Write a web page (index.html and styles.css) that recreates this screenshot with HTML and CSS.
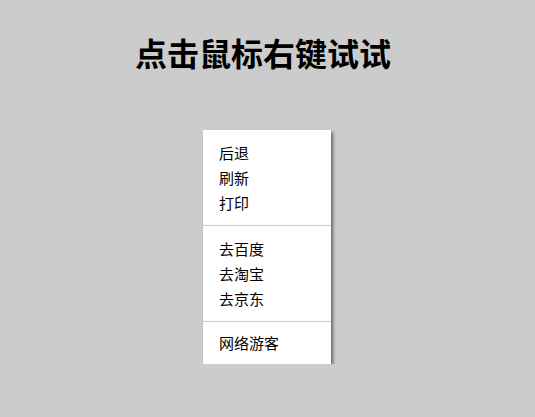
FILE: index.html
```html
<!DOCTYPE html>
<html lang="zh-CN">
<head>
    <meta charset="UTF-8">
    <meta name="viewport" content="width=device-width, initial-scale=1.0">
    <title>右键菜单</title>
    <link rel="stylesheet" href="styles.css">
</head>
<body>

    <h1>点击鼠标右键试试</h1>

    <!-- 自定义右键菜单 -->
    <div class="menu">
        <ul class="menu-group">
            <li>后退</li>
            <li>刷新</li>
            <li>打印</li>
        </ul>
        <ul class="menu-group">
            <li>去百度</li>
            <li>去淘宝</li>
            <li>去京东</li>
        </ul>
        <ul class="menu-group last">
            <li>网络游客</li>
        </ul>
    </div>

</body>
</html>
```

FILE: styles.css
```css
body {
    font-family: "Noto Sans CJK SC", "Noto Sans", sans-serif;
    margin: 0;
    padding: 0;
    background-color: #cccccc;
    color: #000;
}
h1 {
    font-size: 32px;
    font-weight: bold;
    text-align: center;
    margin: 29px 0 0;
    padding-right: 9px;
    line-height: 46px;
}
.menu {
    width: 128px;
    margin: 55px 0 0 203px;
    background-color: #fff;
    box-shadow: 2px 2px 3px #666;
}
.menu-group {
    list-style: none;
    margin: 0;
    padding: 10px 0;
    border-bottom: 1px solid #ccc;
}
.menu-group.last {
    padding: 8px 0 9px;
    border-bottom: none;
}
.menu-group li {
    padding-left: 16px;
    font-size: 15px;
    line-height: 25px;
    cursor: default;
}
```
